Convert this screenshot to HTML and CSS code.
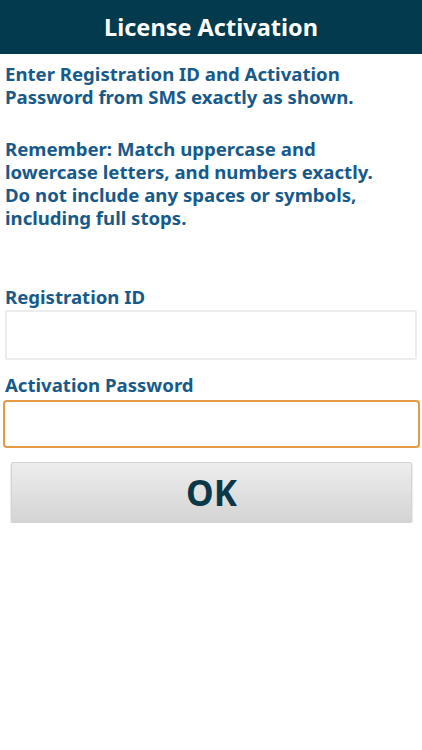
FILE: index.html
```html
<!DOCTYPE html>
<html>
<head>
<meta charset="utf-8">
<link rel="stylesheet" href="styles.css">
</head>
<body>
<header class="topbar">License Activation</header>
<main class="content">
  <p class="intro">Enter Registration ID and Activation<br>Password from SMS exactly as shown.</p>
  <p class="intro remember">Remember: Match uppercase and<br>lowercase letters, and numbers exactly.<br>Do not include any spaces or symbols,<br>including full stops.</p>
  <label class="label first" for="reg">Registration ID</label>
  <input class="field" id="reg" type="text">
  <label class="label second" for="pwd">Activation Password</label>
  <input class="field focused" id="pwd" type="text">
  <div class="btnrow"><button class="ok">OK</button></div>
</main>
</body>
</html>
```
FILE: styles.css
```css
html, body {
  margin: 0;
  padding: 0;
  background: #ffffff;
  font-family: "Noto Sans", "Open Sans", sans-serif;
}
.topbar {
  height: 54px;
  background: #033a4e;
  color: #ffffff;
  font-weight: 700;
  font-size: 23.5px;
  display: flex;
  align-items: center;
  justify-content: center;
}
.content {
  display: flex;
  flex-direction: column;
  padding: 8px 2px 0 5px;
}
.intro {
  margin: 0;
  color: #175a8a;
  font-weight: 700;
  font-size: 18.6px;
  line-height: 23px;
  white-space: nowrap;
}
.remember {
  margin-top: 29px;
}
.label {
  color: #175a8a;
  font-weight: 700;
  font-size: 18.6px;
  line-height: 23px;
}
.label.first {
  margin-top: 56px;
}
.label.second {
  margin-top: 13px;
}
.field {
  box-sizing: border-box;
  height: 50px;
  width: 412px;
  margin: 2px 0 0 0;
  border: 2px solid #ececec;
  border-radius: 2px;
  background: #ffffff;
  outline: none;
}
.field.focused {
  margin: 4px 0 0 -2px;
  width: 417px;
  height: 48px;
  border: 2px solid #e59a45;
  border-radius: 4px;
}
.btnrow {
  display: flex;
  padding: 14px 8px 0 6px;
}
.ok {
  flex: 1;
  height: 61px;
  border: 1px solid #d4d4d4;
  border-radius: 2px;
  background: linear-gradient(#ededed, #d4d4d4);
  box-shadow: 0 2px 2px rgba(0,0,0,0.28);
  color: #0b3848;
  font-family: "Noto Sans", "Open Sans", sans-serif;
  font-weight: 700;
  font-size: 35px;
  line-height: 1;
}
```
